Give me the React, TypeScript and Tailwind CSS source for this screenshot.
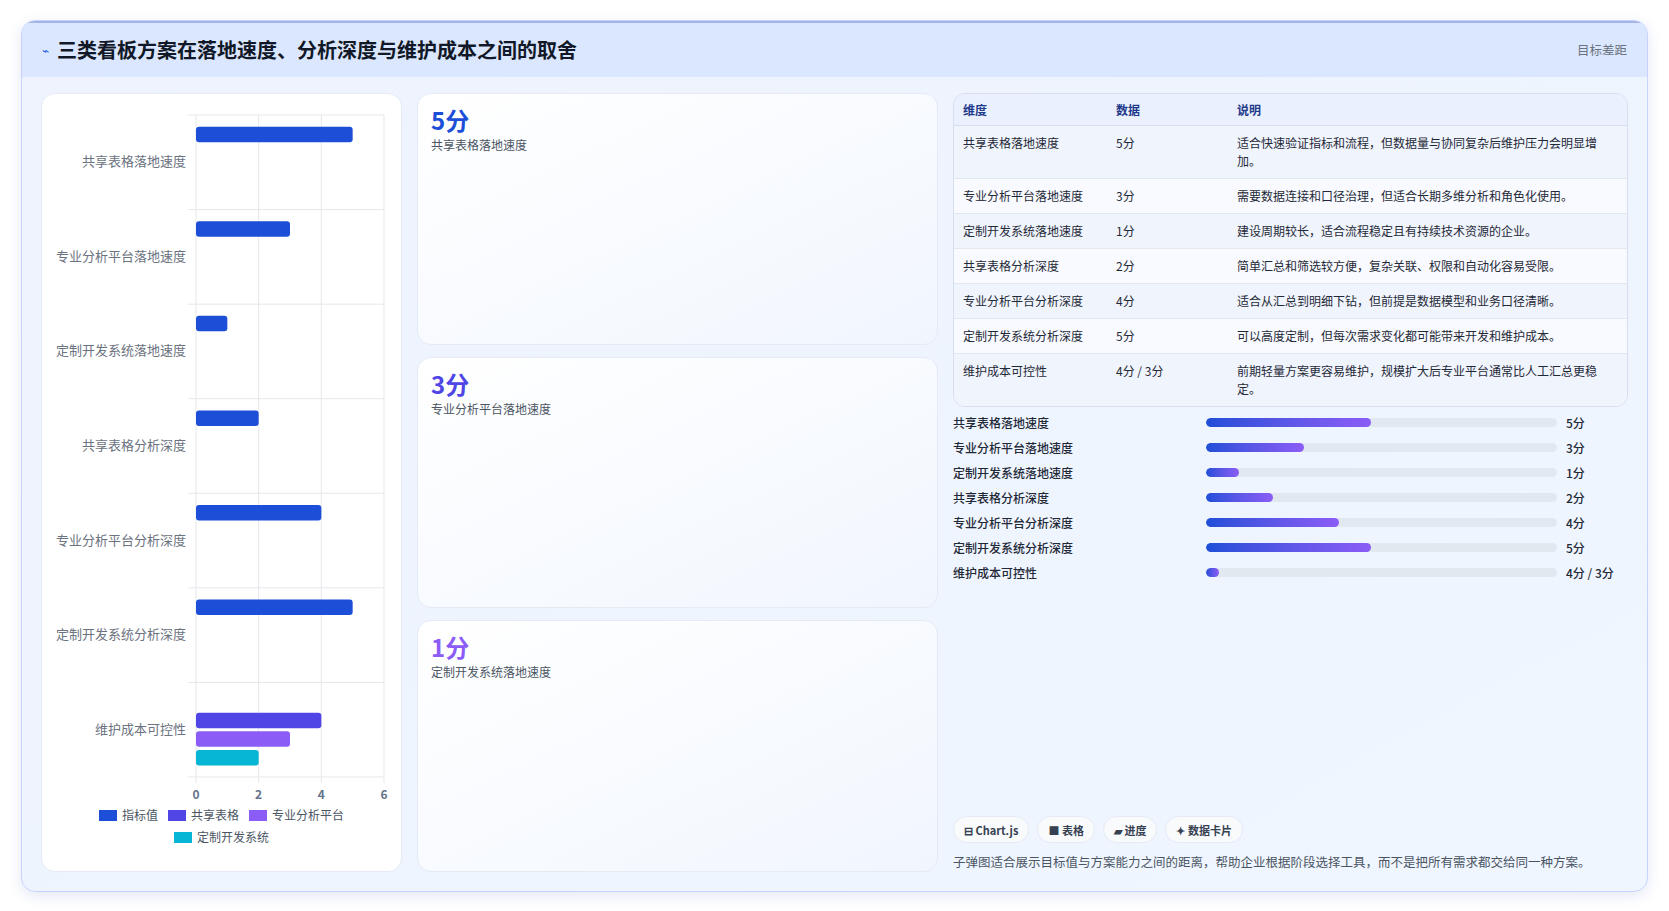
import React from "react";

const cats = ["共享表格落地速度","专业分析平台落地速度","定制开发系统落地速度","共享表格分析深度","专业分析平台分析深度","定制开发系统分析深度","维护成本可控性"];
const colors = ["#1d4ed8","#4f46e5","#8b5cf6","#06b6d4"];
const chartData: number[][] = [[5],[3],[1],[2],[4],[5],[0,4,3,2]];

function Chart() {
  const L = 155, R = 343, T = 21, B = 683;
  const bh = (B - T) / 7;
  const sx = (v: number) => L + (v / 6) * (R - L);
  return (
    <svg width="361" height="712" className="block shrink-0">
      {[0,2,4,6].map(v => (
        <g key={v}>
          <line x1={sx(v)} x2={sx(v)} y1={T} y2={B + 6} stroke="#e5e7eb" />
          <text x={sx(v)} y={B + 22} textAnchor="middle" fontSize="12" fill="#64748b" fontWeight="600">{v}</text>
        </g>
      ))}
      {cats.map((c, i) => (
        <g key={c}>
          <line x1={L - 8} x2={R} y1={T + i * bh} y2={T + i * bh} stroke="#e5e7eb" />
          <text x={L - 10} y={T + i * bh + bh / 2 + 4} textAnchor="end" fontSize="13" fill="#6b7280">{c}</text>
          {chartData[i].map((v, k) => v > 0 && (
            <rect key={k} x={L} y={T + i * bh + 11.7 + k * 18.6} width={sx(v) - L} height={15.5} rx={3} fill={colors[k]} />
          ))}
        </g>
      ))}
      <line x1={L - 8} x2={R} y1={B} y2={B} stroke="#e5e7eb" />
    </svg>
  );
}

const rows = [
  ["共享表格落地速度","5分","适合快速验证指标和流程，但数据量与协同复杂后维护压力会明显增加。"],
  ["专业分析平台落地速度","3分","需要数据连接和口径治理，但适合长期多维分析和角色化使用。"],
  ["定制开发系统落地速度","1分","建设周期较长，适合流程稳定且有持续技术资源的企业。"],
  ["共享表格分析深度","2分","简单汇总和筛选较方便，复杂关联、权限和自动化容易受限。"],
  ["专业分析平台分析深度","4分","适合从汇总到明细下钻，但前提是数据模型和业务口径清晰。"],
  ["定制开发系统分析深度","5分","可以高度定制，但每次需求变化都可能带来开发和维护成本。"],
  ["维护成本可控性","4分 / 3分","前期轻量方案更容易维护，规模扩大后专业平台通常比人工汇总更稳定。"],
];
const progress: [string,string,number][] = [
  ["共享表格落地速度","5分",47],["专业分析平台落地速度","3分",28],["定制开发系统落地速度","1分",9.4],
  ["共享表格分析深度","2分",19],["专业分析平台分析深度","4分",38],["定制开发系统分析深度","5分",47],["维护成本可控性","4分 / 3分",3.8],
];
const cards: [string,string,string][] = [["5分","共享表格落地速度","text-[#1d4ed8]"],["3分","专业分析平台落地速度","text-[#4f46e5]"],["1分","定制开发系统落地速度","text-[#8b5cf6]"]];

export default function App() {
  return (
    <div className="w-[1669px] h-[911px] bg-white pt-[20px] pl-[21px] text-[#1f2937]" style={{ fontFamily: '"Noto Sans CJK SC", "Noto Sans", sans-serif' }}>
      <div className="w-[1627px] h-[872px] rounded-[14px] border border-[#c7d2fe] overflow-hidden bg-gradient-to-br from-[#eef3fe] to-[#eff6ff] shadow-[0_4px_14px_rgba(30,64,175,0.12)] flex flex-col">
        <div className="h-[56px] shrink-0 bg-[#dbe7fe] flex items-center justify-between px-[20px] border-t-2 border-[#a5b4e4]">
          <div className="flex items-center gap-[8px]">
            <span className="text-[#2563eb] text-[12px]">⌁</span>
            <span className="text-[20px] font-bold text-[#111827]">三类看板方案在落地速度、分析深度与维护成本之间的取舍</span>
          </div>
          <span className="text-[12.5px] text-[#6b7280]">目标差距</span>
        </div>
        <div className="flex-1 flex gap-[15px] px-[19px] pt-[16px] pb-[19px]">
          <div className="w-[361px] shrink-0 bg-white rounded-[14px] border border-[#e5eaf5] flex flex-col items-center">
            <Chart />
            <div className="flex flex-wrap justify-center gap-x-[10px] gap-y-[4px] w-[290px] text-[12px] text-[#4b5563]">
              {["指标值","共享表格","专业分析平台","定制开发系统"].map((l, i) => (
                <span key={l} className="flex items-center gap-[5px]">
                  <span className="inline-block w-[18px] h-[11px]" style={{ background: colors[i] }} />{l}
                </span>
              ))}
            </div>
          </div>
          <div className="w-[521px] shrink-0 flex flex-col gap-[12px]">
            {cards.map(([v, l, c]) => (
              <div key={l} className="flex-1 rounded-[14px] border border-[#e5eaf5] bg-gradient-to-br from-white to-[#f1f6fe] px-[13px] pt-[10px]">
                <div className={`text-[24px] font-bold leading-[32px] ${c}`}>{v}</div>
                <div className="text-[12px] text-[#4b5563]">{l}</div>
              </div>
            ))}
          </div>
          <div className="flex-1 flex flex-col">
            <div className="rounded-[12px] border border-[#d6def0] overflow-hidden text-[12px]">
              <div className="flex h-[32px] items-center bg-[#eaf0fd] border-b border-[#d6def0] text-[#1e3a8a] font-semibold">
                <div className="w-[162px] pl-[9px]">维度</div><div className="w-[121px]">数据</div><div className="flex-1">说明</div>
              </div>
              {rows.map((r, i) => (
                <div key={i} className={`flex py-[8px] leading-[18px] ${i < rows.length - 1 ? "border-b border-[#e2e8f0]" : ""} ${i % 2 === 0 ? "bg-[#f0f4fd]" : "bg-[#f8faff]"}`}>
                  <div className="w-[162px] pl-[9px] shrink-0">{r[0]}</div>
                  <div className="w-[121px] shrink-0">{r[1]}</div>
                  <div className="flex-1 pr-[14px]">{r[2]}</div>
                </div>
              ))}
            </div>
            <div className="flex flex-col gap-[6px] mt-[6px] text-[12px] font-medium">
              {progress.map(([l, v, p]) => (
                <div key={l} className="flex items-center h-[19px]">
                  <div className="w-[253px] shrink-0">{l}</div>
                  <div className="w-[351px] h-[9px] rounded-full bg-[#e2e8f0] overflow-hidden">
                    <div className="h-full rounded-full bg-gradient-to-r from-[#1d4ed8] to-[#8b5cf6]" style={{ width: `${p}%` }} />
                  </div>
                  <div className="ml-[9px]">{v}</div>
                </div>
              ))}
            </div>
            <div className="flex-1" />
            <div className="flex gap-[8px] text-[11px] font-semibold text-[#374151]">
              {["⊟ Chart.js","■ 表格","▰ 进度","✦ 数据卡片"].map(t => (
                <span key={t} className="h-[27px] px-[10px] rounded-full bg-[#f8fafc] border border-[#e5eaf5] flex items-center">{t}</span>
              ))}
            </div>
            <div className="mt-[10px] text-[12.5px] text-[#4b5563]">子弹图适合展示目标值与方案能力之间的距离，帮助企业根据阶段选择工具，而不是把所有需求都交给同一种方案。</div>
          </div>
        </div>
      </div>
    </div>
  );
}
